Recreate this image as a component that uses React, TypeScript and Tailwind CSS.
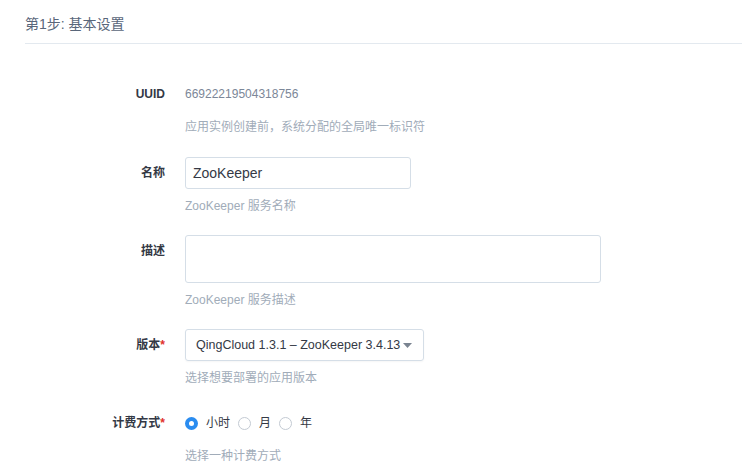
import React from "react";

const font = { fontFamily: '"Liberation Sans", "Noto Sans CJK SC", sans-serif' };

function Label({ text, required }: { text: string; required?: boolean }) {
  return (
    <div className="w-[165px] shrink-0 text-right text-[12px] font-semibold leading-[32px] text-[#343945]">
      {text}
      {required && <span className="text-[#e0312c]">*</span>}
    </div>
  );
}

function Help({ children }: { children: React.ReactNode }) {
  return <div className="mt-[8px] text-[12px] leading-[18px] text-[#a1acb9]">{children}</div>;
}

function Radio({ checked, label }: { checked?: boolean; label: string }) {
  return (
    <div className="flex items-center">
      {checked ? (
        <span className="flex h-[13px] w-[13px] items-center justify-center rounded-full bg-[#2a8cf0]">
          <span className="h-[5px] w-[5px] rounded-full bg-white" />
        </span>
      ) : (
        <span className="h-[13px] w-[13px] rounded-full border border-[#c3cad3] bg-white" />
      )}
      <span className="ml-[8px] text-[12px] text-[#343945]">{label}</span>
    </div>
  );
}

export default function App() {
  return (
    <div className="h-[475px] w-[742px] bg-white pl-[25px]" style={font}>
      <div className="border-b border-[#e3e9ef] pb-[9px] pt-[14px] text-[14px] leading-[20px] text-[#59667a]">
        第1步: 基本设置
      </div>
      <div className="pt-[34px]">
        <div className="-ml-[25px] flex">
          <Label text="UUID" />
          <div className="ml-[20px]">
            <div className="text-[12px] leading-[32px] text-[#7c8798]">66922219504318756</div>
            <Help>应用实例创建前，系统分配的全局唯一标识符</Help>
          </div>
        </div>
        <div className="-ml-[25px] mt-[21px] flex">
          <Label text="名称" />
          <div className="ml-[20px]">
            <div className="flex h-[32px] w-[226px] items-center rounded-[3px] border border-[#d5dee7] px-[7px] text-[14px] text-[#343945]">
              ZooKeeper
            </div>
            <Help>ZooKeeper 服务名称</Help>
          </div>
        </div>
        <div className="-ml-[25px] mt-[20px] flex">
          <Label text="描述" />
          <div className="ml-[20px]">
            <div className="h-[48px] w-[416px] rounded-[3px] border border-[#d5dee7]" />
            <Help>ZooKeeper 服务描述</Help>
          </div>
        </div>
        <div className="-ml-[25px] mt-[20px] flex">
          <Label text="版本" required />
          <div className="ml-[20px]">
            <div className="flex h-[32px] w-[239px] items-center justify-between whitespace-nowrap rounded-[3px] border border-[#d5dee7] pl-[10px] pr-[11px] text-[12.5px] text-[#343945] shadow-[0_1px_2px_rgba(0,0,0,0.04)]">
              <span>QingCloud 1.3.1 – ZooKeeper 3.4.13</span>
              <svg width="9" height="5" viewBox="0 0 9 5" className="shrink-0">
                <path d="M0 0 L9 0 L4.5 5 Z" fill="#7a8491" />
              </svg>
            </div>
            <Help>选择想要部署的应用版本</Help>
          </div>
        </div>
        <div className="-ml-[25px] mt-[20px] flex">
          <Label text="计费方式" required />
          <div className="ml-[20px]">
            <div className="flex h-[32px] items-center gap-[8px]">
              <Radio checked label="小时" />
              <Radio label="月" />
              <Radio label="年" />
            </div>
            <Help>选择一种计费方式</Help>
          </div>
        </div>
      </div>
    </div>
  );
}
